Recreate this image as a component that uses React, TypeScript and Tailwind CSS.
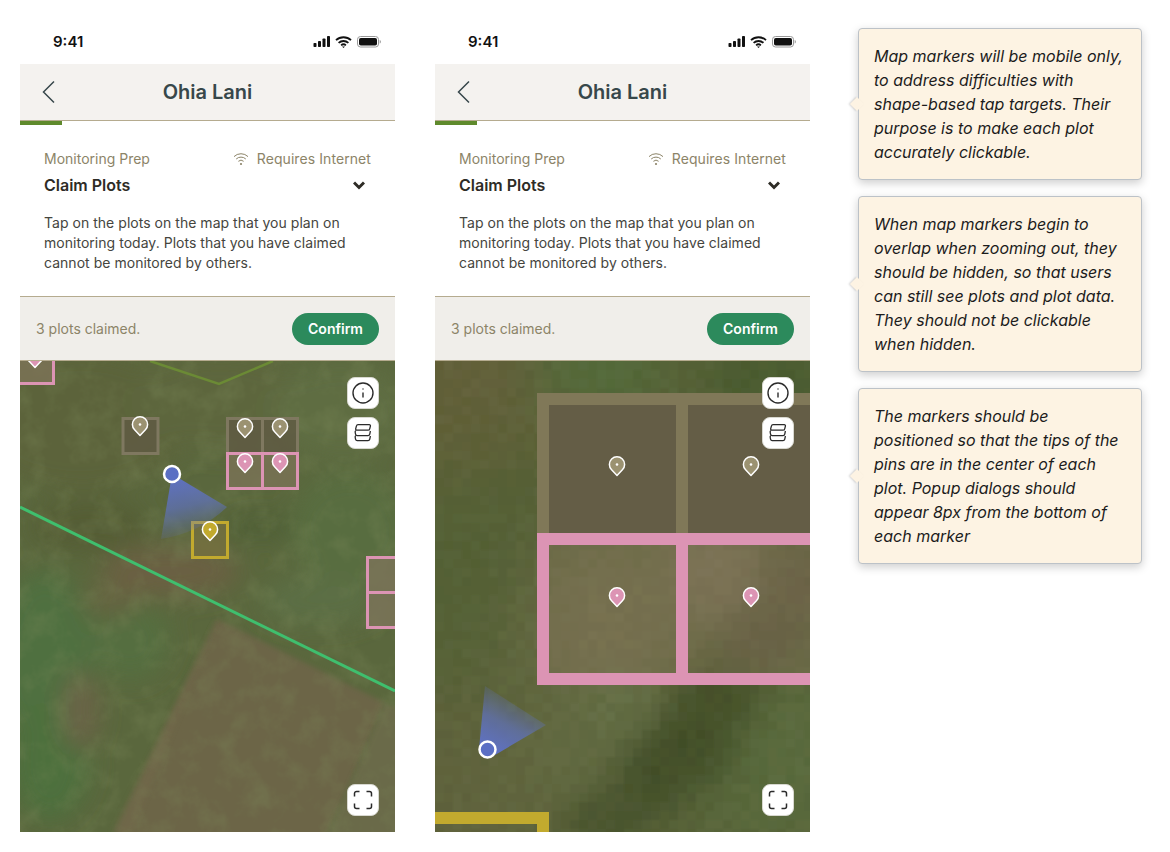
import type { ReactNode } from "react"
import { Info } from "lucide-react"

const PIN = {
  brown: "#9b9271",
  pink: "#dc94b4",
  yellow: "#c2aa2e",
}

const notes = [
  "Map markers will be mobile only, to address difficulties with shape-based tap targets. Their purpose is to make each plot accurately clickable.",
  "When map markers begin to overlap when zooming out, they should be hidden, so that users can still see plots and plot data. They should not be clickable when hidden.",
  "The markers should be positioned so that the tips of the pins are in the center of each plot. Popup dialogs should appear 8px from the bottom of each marker",
]

function StatusIcons() {
  return (
    <svg width="68" height="14" viewBox="0 0 68 14" fill="none">
      <rect x="0.5" y="8" width="3" height="4" rx="0.8" fill="#111" />
      <rect x="5" y="6" width="3" height="6" rx="0.8" fill="#111" />
      <rect x="9.5" y="3.5" width="3" height="8.5" rx="0.8" fill="#111" />
      <rect x="14" y="1" width="3" height="11" rx="0.8" fill="#111" />
      <path d="M23 5.2a11 11 0 0 1 15 0M25.6 7.9a7.2 7.2 0 0 1 9.8 0M28.1 10.3a3.6 3.6 0 0 1 4.8 0" stroke="#111" strokeWidth="1.8" />
      <path d="M30.5 13l-1.5-1.6h3z" fill="#111" />
      <rect x="44.5" y="1.5" width="21" height="10.5" rx="3" stroke="#999" />
      <rect x="46" y="3" width="18" height="7.5" rx="1.8" fill="#111" />
      <path d="M66.7 5v3.5c.8-.3 1.2-1 1.2-1.7s-.4-1.5-1.2-1.8z" fill="#999" />
    </svg>
  )
}

function WifiSmall() {
  return (
    <svg width="16" height="14" viewBox="0 0 16 14" fill="none" stroke="#8c8468" strokeWidth="1">
      <path d="M1 4.6a10 10 0 0 1 14 0M3.2 7a7 7 0 0 1 9.6 0M5.4 9.3a3.8 3.8 0 0 1 5.2 0" />
      <circle cx="8" cy="12" r="1.1" fill="#8c8468" stroke="none" />
    </svg>
  )
}

function MapButton({ children }: { children: ReactNode }) {
  return (
    <div className="flex h-8 w-8 items-center justify-center rounded-lg border border-[#d8d8d0] bg-white text-[#2b2b2b]">
      {children}
    </div>
  )
}

function LayersIcon() {
  return (
    <svg width="20" height="20" viewBox="0 0 20 20" fill="none" stroke="#2b2b2b" strokeWidth="1.3" strokeLinejoin="round">
      <path d="M5 1.7H16.2c.9 0 1.4.7 1.2 1.5l-.7 2.600c-.2.900-.9 1.400-1.800 1.400H4c-1 0-1.500-.7-1.300-1.500l.7-2.600C3.600 2.300 4.200 1.700 5 1.700z" />
      <path d="M2.800 7.500C2.200 8 2 8.600 2.200 9.300l.4 2c.2.800.8 1.300 1.600 1.300H15c.9 0 1.500-.5 1.700-1.300l.7-3.300" />
      <path d="M2.800 12.500C2.200 13 2 13.600 2.200 14.300l.4 2c.2.800.8 1.300 1.600 1.300H15c.9 0 1.500-.5 1.700-1.300l.7-3.300" />
    </svg>
  )
}

function ExpandIcon() {
  return (
    <svg width="20" height="20" viewBox="0 0 20 20" fill="none" stroke="#2b2b2b" strokeWidth="1.5">
      <path d="M1.500 6.500V3.500a2 2 0 0 1 2-2h3M13.500 1.500h3a2 2 0 0 1 2 2v3M18.500 13.500v3a2 2 0 0 1-2 2h-3M6.500 18.500h-3a2 2 0 0 1-2-2v-3" />
    </svg>
  )
}

// x, y is the tip of the pin
function Pin({ x, y, color }: { x: number; y: number; color: string }) {
  return (
    <g transform={`translate(${x} ${y})`}>
      <path
        d="M0 -0.6 L-5.4 -6.2 A7.6 7.6 0 1 1 5.4 -6.2 Z"
        fill={color}
        stroke="#fff"
        strokeWidth="1.5"
        strokeLinejoin="round"
      />
      <circle cx="0" cy="-11.5" r="1.3" fill="#fff" />
    </g>
  )
}

function LocationCone({ id, d, x1, y1, x2, y2 }: { id: string; d: string; x1: number; y1: number; x2: number; y2: number }) {
  return (
    <>
      <defs>
        <linearGradient id={id} gradientUnits="userSpaceOnUse" x1={x1} y1={y1} x2={x2} y2={y2}>
          <stop offset="0" stopColor="#5f72c8" stopOpacity="1" />
          <stop offset="0.5" stopColor="#5f72c8" stopOpacity="0.65" />
          <stop offset="1" stopColor="#5f72c8" stopOpacity="0" />
        </linearGradient>
      </defs>
      <path d={d} fill={`url(#${id})`} />
    </>
  )
}

function LocationDot({ x, y }: { x: number; y: number }) {
  return <circle cx={x} cy={y} r="8" fill="#5b6fc4" stroke="#fff" strokeWidth="2.5" />
}

function FarMap() {
  const blotches: [number, number, number, number, string][] = [
    [60, 60, 110, 70, "#5c633a"],
    [200, 40, 90, 50, "#5d663c"],
    [70, 165, 60, 26, "#555d34"],
    [25, 300, 50, 90, "#4f6f3f"],
    [30, 400, 40, 60, "#4e6f3e"],
    [110, 280, 40, 40, "#556e40"],
    [90, 240, 30, 16, "#656441"],
    [60, 350, 18, 40, "#6a6447"],
    [150, 210, 70, 26, "#6a6142"],
    [320, 50, 70, 50, "#5f6d43"],
    [330, 170, 60, 60, "#586d41"],
    [240, 165, 34, 10, "#4a5a30"],
    [300, 240, 60, 24, "#5c6e45"],
  ]
  return (
    <svg className="absolute inset-0" width="375" height="471" viewBox="0 0 375 471">
      <defs>
        <filter id="far-blur" x="-20%" y="-20%" width="140%" height="140%">
          <feGaussianBlur stdDeviation="12" />
        </filter>
        <filter id="field-blur">
          <feGaussianBlur stdDeviation="2.5" />
        </filter>
        <filter id="far-noise" x="0" y="0" width="100%" height="100%">
          <feTurbulence type="fractalNoise" baseFrequency="0.04" numOctaves="4" seed="7" />
          <feColorMatrix values="0 0 0 0 0.2  0 0 0 0 0.25  0 0 0 0 0.1  0 0 0 1.4 -0.6" />
        </filter>
      </defs>
      <rect width="375" height="471" fill="#5a673d" />
      <g filter="url(#far-blur)">
        {blotches.map(([cx, cy, rx, ry, fill], i) => (
          <ellipse key={i} cx={cx} cy={cy} rx={rx} ry={ry} fill={fill} />
        ))}
      </g>
      <path d="M197 258 L365 342 L305 480 L92 480 Z" fill="#6c6547" filter="url(#field-blur)" />
      <path d="M197 258 L92 471 L112 471 Z" fill="#73694b" opacity="0.5" filter="url(#field-blur)" />
      <path d="M365 342 L305 480 L385 480 L385 350 Z" fill="#6a6a49" filter="url(#field-blur)" />
      <rect width="375" height="471" filter="url(#far-noise)" opacity="0.5" />

      <path d="M130 0 L199 23 L253 0" fill="none" stroke="#6b8a35" strokeWidth="2.5" />
      <path d="M0 146 L375 330" fill="none" stroke="#3fbf6e" strokeWidth="3" />

      <rect x="-10" y="-14" width="43.5" height="36.5" fill="#7d7358" fillOpacity="0.8" stroke="#dc94b4" strokeWidth="3" />
      <Pin x={15} y={7} color={PIN.pink} />

      <g fill="#5f5a43" fillOpacity="0.85" stroke="#7f7860" strokeWidth="3">
        <rect x="103" y="57.5" width="35" height="35" />
        <rect x="207.5" y="57.5" width="35" height="35" />
        <rect x="242.5" y="57.5" width="35" height="35" />
      </g>
      <g fill="#7b7356" fillOpacity="0.8" stroke="#dc94b4" strokeWidth="3">
        <rect x="207.5" y="92.5" width="35" height="35" />
        <rect x="242.5" y="92.5" width="35" height="35" />
      </g>
      <rect x="172.5" y="161.5" width="35" height="35" fill="#76713f" fillOpacity="0.8" stroke="#c2aa2e" strokeWidth="3" />
      <g fill="#7a7358" fillOpacity="0.85" stroke="#dc94b4" strokeWidth="3">
        <rect x="347.5" y="196.5" width="40" height="35" />
        <rect x="347.5" y="231.5" width="40" height="35" />
      </g>

      <LocationCone id="far-cone" d="M152 113 L207 146 Q180 172 141 178 Z" x1={152} y1={113} x2={168} y2={180} />
      <LocationDot x={152} y={113} />

      <Pin x={120} y={75} color={PIN.brown} />
      <Pin x={225} y={77} color={PIN.brown} />
      <Pin x={260} y={77} color={PIN.brown} />
      <Pin x={225} y={112} color={PIN.pink} />
      <Pin x={260} y={112} color={PIN.pink} />
      <Pin x={190} y={180} color={PIN.yellow} />
    </svg>
  )
}

// rough blocky satellite tile, sampled from a few colour blobs
function mosaicCells() {
  const blobs: [number, number, number, [number, number, number]][] = [
    [30, 15, 90, [102, 96, 58]],
    [150, 10, 50, [80, 108, 58]],
    [340, 20, 50, [72, 90, 46]],
    [60, 210, 110, [82, 96, 52]],
    [30, 420, 90, [98, 100, 62]],
    [130, 390, 50, [100, 108, 68]],
    [360, 225, 30, [92, 86, 60]],
    [325, 275, 30, [88, 84, 58]],
    [290, 330, 30, [66, 76, 38]],
    [265, 378, 36, [58, 70, 34]],
    [215, 410, 32, [62, 74, 38]],
    [165, 455, 32, [68, 80, 42]],
    [340, 400, 60, [90, 108, 62]],
    [180, 345, 34, [100, 112, 70]],
    [280, 210, 40, [126, 116, 90]],
    [150, 250, 70, [124, 116, 84]],
  ]
  const cells: { x: number; y: number; fill: string }[] = []
  const size = 9
  for (let row = -2; row < 55; row++) {
    for (let col = -2; col < 44; col++) {
      const x = col * size + 4
      const y = row * size + 4
      let r = 88
      let g = 98
      let b = 56
      let w = 1
      for (const [bx, by, br, c] of blobs) {
        const d = ((x - bx) ** 2 + (y - by) ** 2) / (br * br)
        const k = 4 * Math.exp(-d)
        r += c[0] * k
        g += c[1] * k
        b += c[2] * k
        w += k
      }
      const jitter = Math.sin(col * 12.9898 + row * 78.233) * 43758.5453
      const n = (jitter - Math.floor(jitter) - 0.5) * 6
      cells.push({
        x: col * size,
        y: row * size,
        fill: `rgb(${Math.round(r / w + n)},${Math.round(g / w + n)},${Math.round(b / w + n)})`,
      })
    }
  }
  return cells
}

function CloseMap() {
  const cells = mosaicCells()
  return (
    <svg className="absolute inset-0" width="375" height="471" viewBox="0 0 375 471">
      <defs>
        <filter id="close-blur">
          <feGaussianBlur stdDeviation="1.2" />
        </filter>
      </defs>
      <g filter="url(#close-blur)">
        {cells.map((c, i) => (
          <rect key={i} x={c.x} y={c.y} width="9.5" height="9.5" fill={c.fill} />
        ))}
      </g>

      <g fill="#645d46" stroke="#807858" strokeWidth="12">
        <rect x="108" y="38" width="139" height="140" />
        <rect x="247" y="38" width="139" height="140" />
      </g>
      <g fill="#85755a" fillOpacity="0.4" stroke="#dc94b4" strokeWidth="12">
        <rect x="108" y="178" width="139" height="140" />
        <rect x="247" y="178" width="139" height="140" />
      </g>
      <path d="M-10 457 H108 V480" fill="none" stroke="#c2aa2e" strokeWidth="12" />

      <LocationCone id="close-cone" d="M44 388 L50 325 L111 364 L60 394 Z" x1={52} y1={392} x2={84} y2={332} />
      <LocationDot x={52.5} y={388.5} />

      <Pin x={182} y={115} color={PIN.brown} />
      <Pin x={316} y={115} color={PIN.brown} />
      <Pin x={182} y={246} color={PIN.pink} />
      <Pin x={316} y={246} color={PIN.pink} />
    </svg>
  )
}

function Phone({ map }: { map: ReactNode }) {
  return (
    <div className="flex h-[812px] w-[375px] shrink-0 flex-col bg-white">
      <div className="flex h-[44px] items-center justify-between pl-[33px] pr-[14px]">
        <span className="pt-[1px] text-[15px] font-semibold text-[#111]">9:41</span>
        <StatusIcons />
      </div>

      <header className="relative flex h-[57px] items-center justify-center border-b border-[#b5ab8f] bg-[#f4f2ef]">
        <svg className="absolute left-[21px] top-[16px]" width="16" height="24" viewBox="0 0 16 24" fill="none" stroke="#37474a" strokeWidth="1.5">
          <path d="M13 1.5 L2.5 12 L13 22.5" />
        </svg>
        <h1 className="text-[20px] font-semibold text-[#37474a]">Ohia Lani</h1>
      </header>
      <div className="h-[4px] w-[42px] bg-[#5f8a2c]" />

      <div className="flex h-[172px] flex-col border-b border-[#b5ab8f] px-6 pt-[23px]">
        <div className="flex h-[22px] items-center justify-between">
          <span className="text-sm text-[#8c8468]">Monitoring Prep</span>
          <span className="flex items-center gap-[8px] text-sm tracking-[0.08px] text-[#8c8468]">
            <WifiSmall />
            Requires Internet
          </span>
        </div>
        <div className="mt-[3px] flex h-[24px] items-center justify-between pr-[6px]">
          <span className="text-base font-semibold text-[#2e2c26]">Claim Plots</span>
          <svg width="12" height="9" viewBox="0 0 12 9" fill="none" stroke="#2e2c26" strokeWidth="3">
            <path d="M1 1.5 L6 6.5 L11 1.5" />
          </svg>
        </div>
        <p className="mt-[16px] w-[312px] text-sm leading-5 tracking-[0.03px] text-[#45453e]">
          Tap on the plots on the map that you plan on monitoring today. Plots that you have claimed cannot be monitored by others.
        </p>
      </div>

      <div className="flex h-[64px] items-center justify-between border-b border-[#b5ab8f] bg-[#f0eeea] pl-4 pr-4">
        <span className="text-sm text-[#8c8468]">3 plots claimed.</span>
        <button className="h-8 w-[87px] rounded-full bg-[#2c8a5c] text-sm font-semibold text-white">Confirm</button>
      </div>

      <div className="relative flex-1 overflow-hidden">
        {map}
        <div className="absolute right-4 top-4 flex flex-col gap-2">
          <MapButton>
            <Info size={24} strokeWidth={1.4} />
          </MapButton>
          <MapButton>
            <LayersIcon />
          </MapButton>
        </div>
        <div className="absolute bottom-4 right-4">
          <MapButton>
            <ExpandIcon />
          </MapButton>
        </div>
      </div>
    </div>
  )
}

function Note({ text }: { text: string }) {
  return (
    <div className="relative rounded border border-[#bcc2c8] bg-[#fdf3e3] px-[15px] py-[15px] text-base italic leading-6 text-[#1c1c1c] shadow-[0_3px_10px_rgba(0,0,0,0.2)]">
      <div className="absolute -left-[7px] top-1/2 h-[10px] w-[10px] -translate-y-1/2 rotate-45 bg-[#fdf3e3] shadow-[-1px_1px_2px_rgba(0,0,0,0.15)]" />
      <p className="relative">{text}</p>
    </div>
  )
}

export default function App() {
  return (
    <div className="flex h-[852px] w-[1170px] items-start gap-10 overflow-hidden bg-white pl-5 pt-5 font-['Inter',sans-serif]">
      <Phone map={<FarMap />} />
      <Phone map={<CloseMap />} />
      <div className="ml-2 mt-2 flex w-[284px] shrink-0 flex-col gap-4">
        {notes.map((n) => (
          <Note key={n} text={n} />
        ))}
      </div>
    </div>
  )
}
